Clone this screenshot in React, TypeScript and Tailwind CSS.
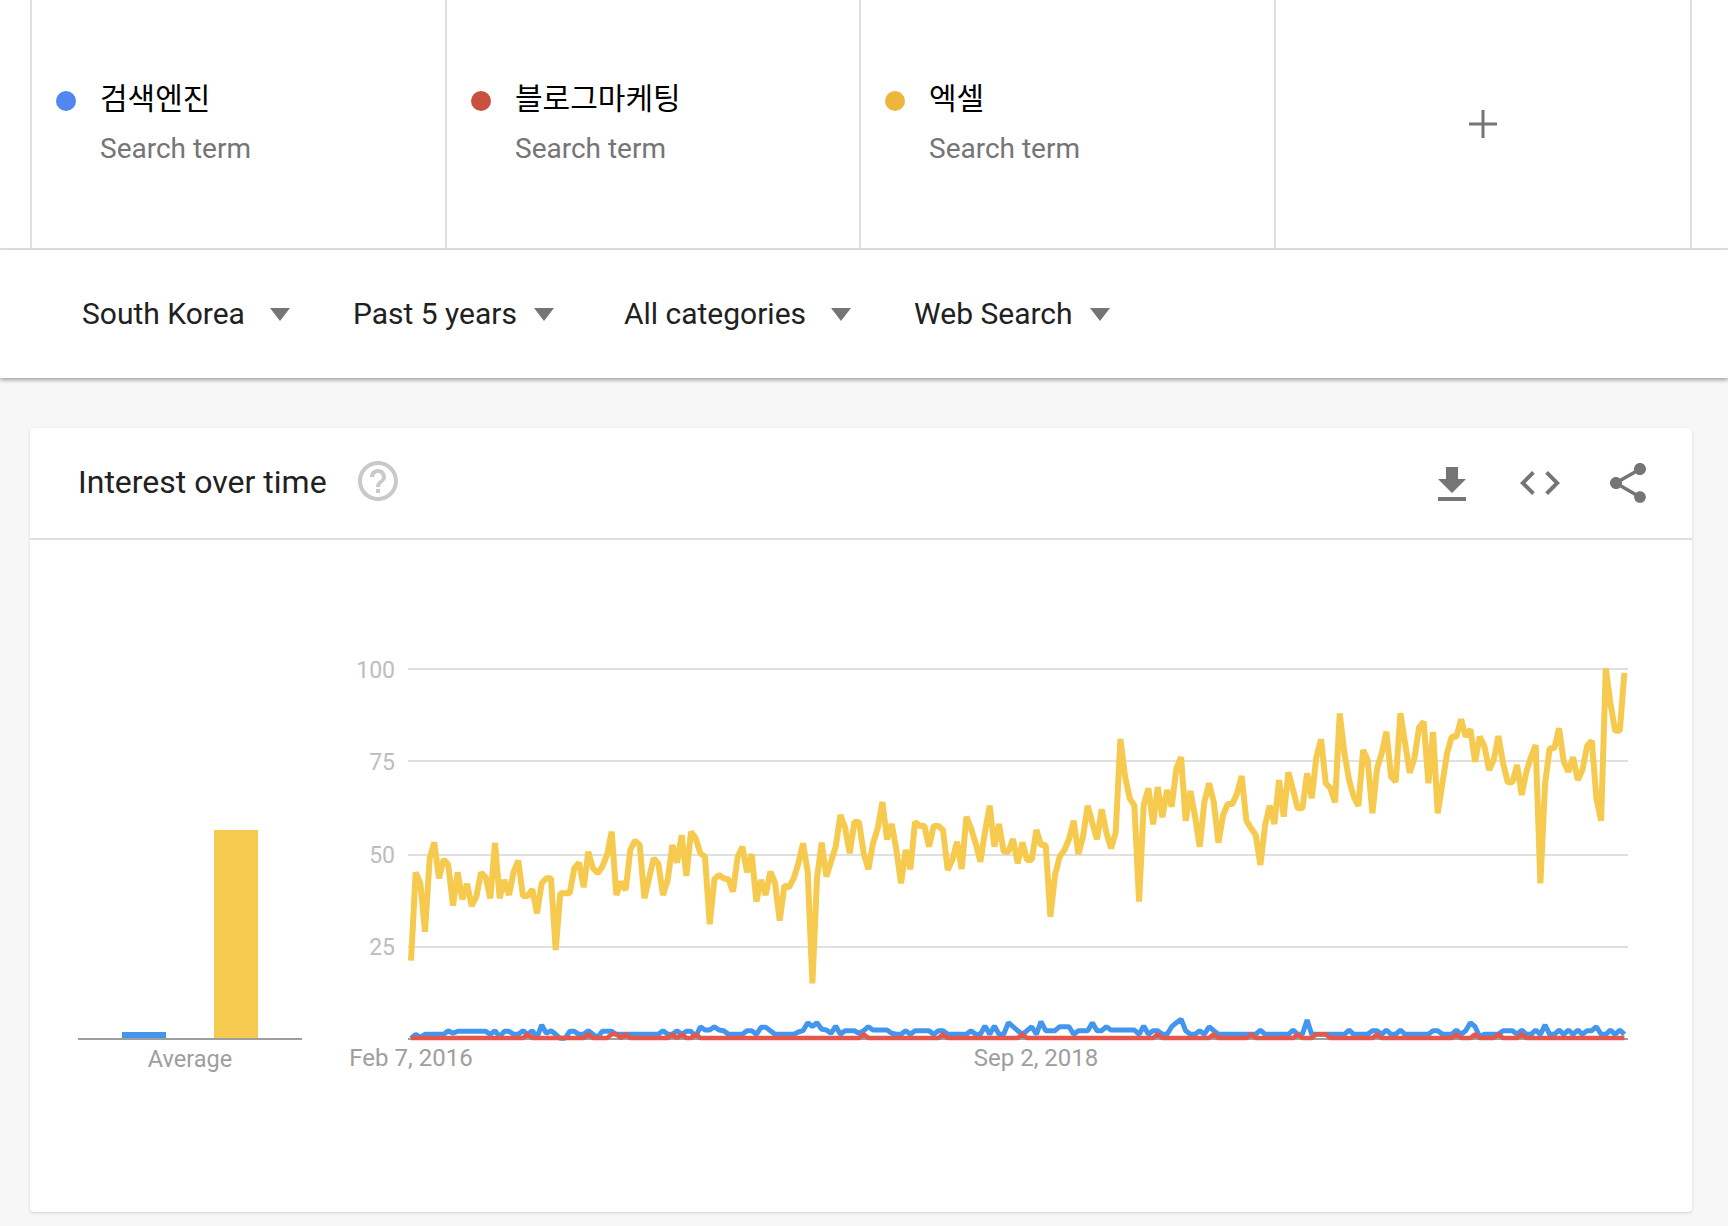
const yellow = [
  962, 697, 730, 875, 655, 607, 715, 658, 675, 797, 697, 778, 732, 798, 770, 698, 712, 775, 609, 775,
  720, 765, 695, 662, 768, 768, 748, 820, 730, 715, 715, 930, 760, 760, 760, 685, 668, 742, 635, 685,
  700, 680, 645, 575, 765, 725, 750, 630, 602, 615, 775, 715, 655, 672, 765, 720, 615, 668, 586, 708,
  575, 595, 640, 650, 853, 718, 705, 715, 718, 755, 650, 620, 697, 642, 785, 720, 765, 695, 728, 842,
  737, 742, 715, 670, 610, 695, 1030, 715, 608, 710, 665, 620, 525, 562, 640, 546, 546, 640, 688, 610,
  565, 486, 598, 552, 630, 730, 630, 688, 545, 558, 558, 620, 558, 558, 570, 690, 660, 605, 687, 530,
  565, 610, 665, 575, 497, 620, 552, 635, 635, 597, 670, 607, 660, 660, 570, 615, 615, 830, 705, 650,
  630, 598, 542, 642, 590, 497, 550, 598, 508, 578, 625, 578, 297, 410, 475, 497, 785, 495, 445, 553,
  441, 532, 450, 500, 385, 352, 542, 453, 530, 620, 485, 430, 485, 608, 525, 492, 492, 460, 408, 542,
  565, 585, 675, 555, 497, 552, 420, 530, 397, 450, 505, 505, 400, 475, 350, 298, 430, 445, 487, 220,
  340, 420, 470, 498, 330, 360, 520, 385, 340, 275, 410, 425, 220, 310, 398, 355, 262, 245, 430, 276,
  520, 430, 340, 290, 290, 238, 290, 268, 365, 290, 318, 390, 360, 288, 370, 427, 427, 375, 465, 395,
  350, 315, 730, 430, 325, 325, 265, 365, 395, 352, 420, 390, 318, 302, 475, 542, 85, 190, 272, 272, 98,
];

// weeks that leave the flat line, everything else sits at the default value
const blueBumps: Record<number, number> = {
  0: 1195, 2: 1192, 8: 1172, 9: 1180, 10: 1174, 11: 1174, 12: 1174, 13: 1174, 14: 1174, 15: 1174, 16: 1174,
  18: 1172, 19: 1190, 20: 1174, 21: 1174, 24: 1172, 26: 1172, 27: 1192, 28: 1155, 29: 1180, 30: 1172,
  32: 1195, 33: 1195, 34: 1174, 35: 1174, 38: 1172, 40: 1192, 41: 1174, 42: 1174, 43: 1174, 54: 1172,
  57: 1172, 59: 1174, 60: 1174, 61: 1190, 62: 1160, 63: 1170, 64: 1170, 65: 1160, 66: 1170, 67: 1172,
  72: 1172, 73: 1172, 75: 1162, 76: 1162, 77: 1172, 83: 1176, 84: 1172, 85: 1148, 86: 1160, 87: 1148,
  88: 1168, 89: 1170, 90: 1180, 91: 1158, 93: 1172, 94: 1172, 95: 1172, 96: 1180, 97: 1172, 98: 1160,
  99: 1170, 100: 1170, 101: 1170, 102: 1170, 103: 1180, 106: 1172, 108: 1172, 109: 1172, 110: 1172,
  111: 1172, 113: 1172, 114: 1172, 120: 1172, 123: 1158, 125: 1158, 128: 1148, 129: 1160, 130: 1172,
  132: 1172, 133: 1160, 135: 1145, 136: 1172, 137: 1172, 138: 1172, 139: 1160, 140: 1160, 141: 1160,
  143: 1172, 144: 1172, 145: 1172, 146: 1148, 147: 1172, 148: 1172, 149: 1160, 150: 1170, 151: 1170,
  152: 1170, 153: 1170, 154: 1170, 155: 1170, 157: 1158, 159: 1172, 160: 1172, 163: 1160, 164: 1148,
  165: 1138, 166: 1172, 169: 1172, 171: 1160, 172: 1172, 182: 1170, 189: 1170, 192: 1140, 201: 1170,
  206: 1172, 207: 1172, 209: 1170, 212: 1170, 219: 1172, 220: 1172, 224: 1170, 226: 1172, 227: 1148,
  228: 1160, 229: 1190, 234: 1172, 235: 1172, 236: 1172, 238: 1170, 241: 1170, 243: 1155, 246: 1170,
  248: 1170, 250: 1170, 252: 1172, 253: 1172, 254: 1160, 257: 1170, 259: 1170,
};

const redBumps = [25, 38, 43, 44, 46, 56, 58, 61, 97, 114, 131, 160, 172, 180, 190, 194, 195, 196, 207, 224, 228, 233, 238];

function toPoints(values: number[]) {
  return values.map((v, i) => `${(411 + i * 4.667).toFixed(1)},${(640 + v / 3).toFixed(1)}`).join(" ");
}

const weeks = Array.from({ length: 261 }, (_, i) => i);
const bluePoints = toPoints(weeks.map((i) => blueBumps[i] ?? 1183));
const redPoints = toPoints(weeks.map((i) => (redBumps.includes(i) ? 1183 : 1194)));
const yellowPoints = toPoints(yellow);

const terms = [
  { name: "검색엔진", dot: "bg-[#5187f0]", width: "w-[415px]" },
  { name: "블로그마케팅", dot: "bg-[#c94f3e]", width: "w-[414px]" },
  { name: "엑셀", dot: "bg-[#edb53c]", width: "w-[415px]" },
];

const filters = [
  { label: "South Korea", item: "gap-[25px] mr-[63px]" },
  { label: "Past 5 years", item: "gap-[17px] mr-[70px]" },
  { label: "All categories", item: "gap-[25px] mr-[63px]" },
  { label: "Web Search", item: "gap-[17px]" },
];

const gridLines = [
  { y: 669, label: "100", textY: 678 },
  { y: 761, label: "75", textY: 770 },
  { y: 855, label: "50", textY: 863 },
  { y: 947, label: "25", textY: 955 },
];

function ActionIcon({ d, className = "" }: { d: string; className?: string }) {
  return (
    <svg viewBox="0 0 24 24" className={`h-12 w-12 fill-[#757575] ${className}`}>
      <path d={d} />
    </svg>
  );
}

export default function App() {
  return (
    <div className="flex h-[1226px] flex-col overflow-hidden bg-[#f7f7f7] font-['Roboto',sans-serif]">
      <div className="flex h-[250px] border-b-2 border-[#e0e0e0] bg-white pl-[30px]">
        {terms.map((t) => (
          <div key={t.name} className={`flex gap-[24px] border-l-2 border-[#e0e0e0] pt-[76px] pl-[24px] ${t.width}`}>
            <div className={`mt-[15px] h-5 w-5 rounded-full ${t.dot}`} />
            <div>
              <div className="h-10 text-[30px] leading-10 text-black font-['Noto_Sans_CJK_KR',sans-serif]">{t.name}</div>
              <div className="mt-[16px] text-[28px] leading-[34px] text-[#757575]">Search term</div>
            </div>
          </div>
        ))}
        <div className="flex w-[418px] items-center justify-center border-x-2 border-[#e0e0e0]">
          <svg viewBox="0 0 28 28" className="h-7 w-7 stroke-[#757575] stroke-[3]">
            <path d="M0 14H28M14 0V28" />
          </svg>
        </div>
      </div>

      <div className="flex h-[128px] items-center bg-white pl-[82px] shadow-[0_2px_4px_rgba(0,0,0,0.35)]">
        {filters.map((f) => (
          <div key={f.label} className={`flex items-center ${f.item}`}>
            <span className="mb-[2px] text-[30px] text-[#212121]">{f.label}</span>
            <span className="h-0 w-0 border-x-[10px] border-t-[13px] border-x-transparent border-t-[#757575]" />
          </div>
        ))}
      </div>

      <div className="px-[30px] pt-[50px]">
        <div className="h-[784px] w-[1662px] rounded-[4px] bg-white shadow-[0_1px_3px_rgba(0,0,0,0.15)]">
          <div className="flex h-[112px] items-center border-b-2 border-[#e0e0e0] pr-10 pl-[48px]">
            <span className="mb-[2px] text-[32px] text-[#212121]">Interest over time</span>
            <svg viewBox="0 0 24 24" className="ml-[27px] h-12 w-12 -translate-y-[2px] fill-[#c9c9c9]">
              <path d="M11 18h2v-2h-2v2zm1-16C6.48 2 2 6.48 2 12s4.48 10 10 10 10-4.48 10-10S17.52 2 12 2zm0 18c-4.41 0-8-3.59-8-8s3.59-8 8-8 8 3.59 8 8-3.59 8-8 8zm0-14c-2.21 0-4 1.79-4 4h2c0-1.1.9-2 2-2s2 .9 2 2c0 2-3 1.75-3 5h2c0-2.25 3-2.5 3-5 0-2.21-1.79-4-4-4z" />
            </svg>
            <div className="ml-auto flex gap-10">
              <ActionIcon className="translate-y-[2px]" d="M19 9h-4V3H9v6H5l7 7 7-7zM5 18v2h14v-2H5z" />
              <ActionIcon d="M9.4 16.6L4.8 12l4.6-4.6L8 6l-6 6 6 6 1.4-1.4zm5.2 0l4.6-4.6-4.6-4.6L16 6l6 6-6 6-1.4-1.4z" />
              <ActionIcon d="M18 16.08c-.76 0-1.44.3-1.96.77L8.91 12.7c.05-.23.09-.46.09-.7s-.04-.47-.09-.7l7.05-4.11c.54.5 1.25.81 2.04.81 1.66 0 3-1.34 3-3s-1.34-3-3-3-3 1.34-3 3c0 .24.04.47.09.7L8.04 9.81C7.5 9.31 6.79 9 6 9c-1.66 0-3 1.34-3 3s1.34 3 3 3c.79 0 1.5-.31 2.04-.81l7.12 4.16c-.05.21-.08.43-.08.65 0 1.61 1.31 2.92 2.92 2.92 1.61 0 2.92-1.31 2.92-2.92s-1.31-2.92-2.92-2.92z" />
            </div>
          </div>

          <div className="flex pl-[48px]">
            <div className="mt-[290px] w-[224px]">
              <div className="flex h-[210px] items-end gap-12 border-b-2 border-[#9e9e9e] pl-11">
                <div className="h-[6px] w-11 bg-[#4396ee]" />
                <div className="h-[208px] w-11 bg-[#f6ca4e]" />
              </div>
              <div className="mt-[4px] text-center text-[23.5px] leading-[30px] text-[#9e9e9e]">Average</div>
            </div>
            <svg viewBox="340 650 1300 430" className="mt-[110px] ml-[38px] h-[430px] w-[1300px]">
              {gridLines.map((g) => (
                <g key={g.label}>
                  <line x1="408" x2="1628" y1={g.y} y2={g.y} stroke="#e0e0e0" strokeWidth="2" />
                  <text x="395" y={g.textY} textAnchor="end" fontSize="23" fill="#bdbdbd">
                    {g.label}
                  </text>
                </g>
              ))}
              <line x1="408" x2="1628" y1="1039" y2="1039" stroke="#9e9e9e" strokeWidth="2" />
              <polyline points={yellowPoints} fill="none" stroke="#f6ca4e" strokeWidth="6" strokeLinejoin="bevel" />
              <polyline points={bluePoints} fill="none" stroke="#4396ee" strokeWidth="5" strokeLinejoin="bevel" />
              <polyline points={redPoints} fill="none" stroke="#e5574a" strokeWidth="4.5" strokeLinejoin="bevel" />
              <text x="411" y="1066" textAnchor="middle" fontSize="24" fill="#9e9e9e">
                Feb 7, 2016
              </text>
              <text x="1036" y="1066" textAnchor="middle" fontSize="24" fill="#9e9e9e">
                Sep 2, 2018
              </text>
            </svg>
          </div>
        </div>
      </div>
    </div>
  );
}
